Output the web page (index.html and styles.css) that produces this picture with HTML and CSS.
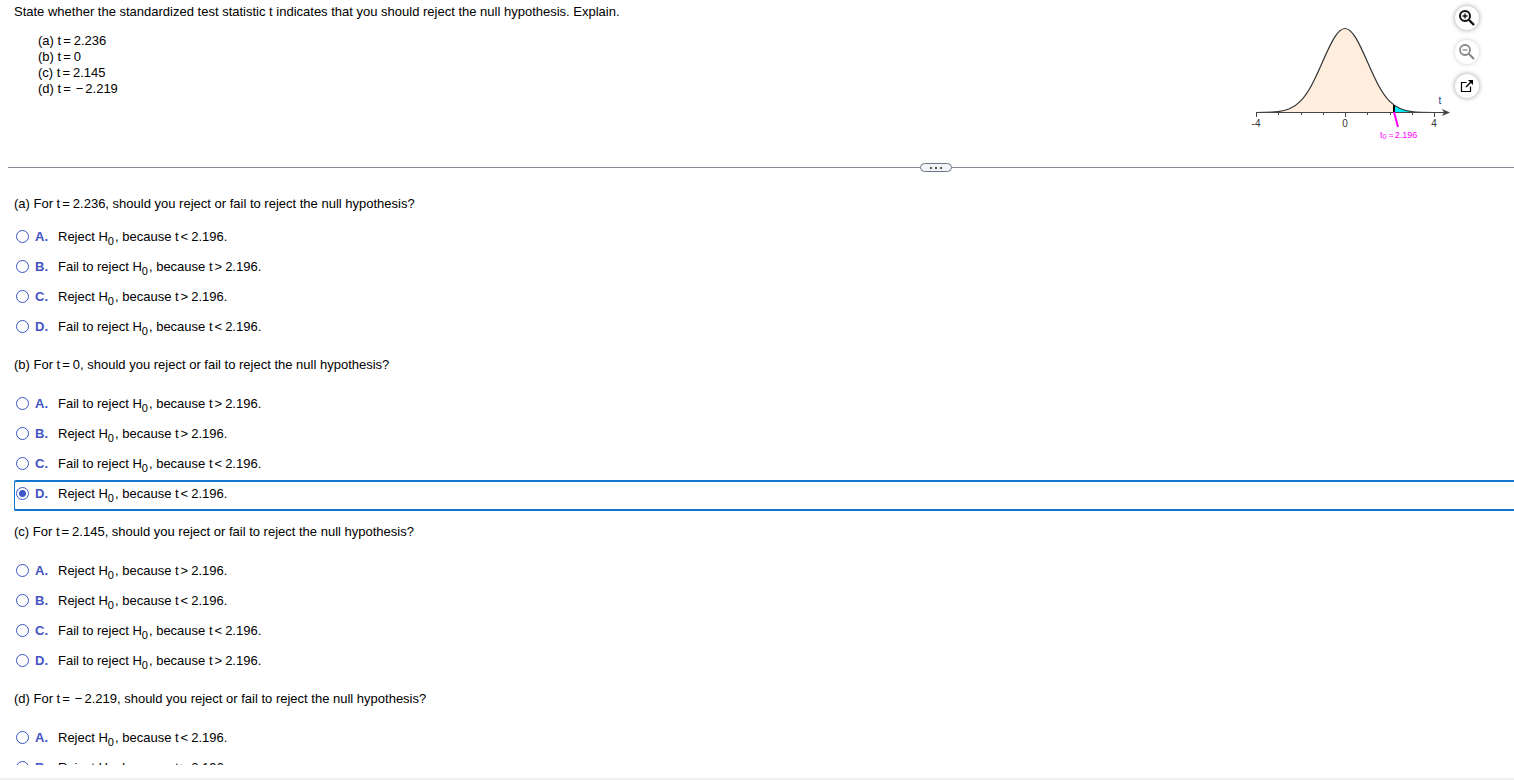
FILE: index.html
```html
<!DOCTYPE html>
<html lang="en">

<head>
    <meta charset="UTF-8">
    <meta name="viewport" content="width=device-width, initial-scale=1.0">
    <title>Hypothesis Test Exercise</title>
    <link rel="stylesheet" href="styles.css">
</head>

<body>
    <main class="exercise">
        <section class="problem">
            <div class="problem-text">
                <p>State whether the standardized test statistic t indicates that you should reject the null hypothesis. Explain.</p>
                <ul class="values">
                    <li>(a) t<span class="op">=</span>2.236</li>
                    <li>(b) t<span class="op">=</span>0</li>
                    <li>(c) t<span class="op">=</span>2.145</li>
                    <li>(d) t<span class="op">=</span><span class="op sign">−</span>2.219</li>
                </ul>
            </div>

            <div class="figure">
                <svg class="graph" width="214" height="144" viewBox="0 0 214 144" role="img" aria-label="Right-tailed t distribution">
                    <!-- Area under the curve -->
                    <path fill="#ffeedd" d="M16 112.5C23.4 112.5 30.8 112.5 38.2 111.6C41.9 111.1 45.7 110.3 49.4 108.8C53.1 107.3 56.8 104.9 60.5 101.1C64.2 97.3 67.9 92 71.6 85.2C75.3 78.4 79 70.1 82.7 61.6C86.4 53.1 90.2 44.6 93.9 38.4C97.6 32.2 101.3 28.5 105 28.5C108.7 28.5 112.4 32.2 116.1 38.4C119.8 44.6 123.6 53.1 127.3 61.6C131 70.1 134.7 78.4 138.4 85.2C142.1 92 145.8 97.3 149.5 101.1L154 105V112.5Z"/>
                    <!-- Rejection region -->
                    <path fill="#00f0ff" d="M154 105C156 106.8 158 107.8 160.6 108.8C164.3 110.3 168.1 111.1 171.8 111.6L180 112.5H154Z"/>
                    <path fill="none" stroke="#333" stroke-width="1.2" d="M16 112.5C23.4 112.5 30.8 112.5 38.2 111.6C41.9 111.1 45.7 110.3 49.4 108.8C53.1 107.3 56.8 104.9 60.5 101.1C64.2 97.3 67.9 92 71.6 85.2C75.3 78.4 79 70.1 82.7 61.6C86.4 53.1 90.2 44.6 93.9 38.4C97.6 32.2 101.3 28.5 105 28.5C108.7 28.5 112.4 32.2 116.1 38.4C119.8 44.6 123.6 53.1 127.3 61.6C131 70.1 134.7 78.4 138.4 85.2C142.1 92 145.8 97.3 149.5 101.1C153.2 104.9 156.9 107.3 160.6 108.8C164.3 110.3 168.1 111.1 171.8 111.6C179.2 112.5 186.6 112.5 194 112.5"/>
                    <!-- Axis -->
                    <path fill="none" stroke="#444" d="M16 112.5H204M16.5 112V117M38.5 112V115M61.5 112V115M83.5 112V115M105.5 112V117M127.5 112V115M150.5 112V115M172.5 112V115M194.5 112V117"/>
                    <path fill="#444" d="M202 109L210 112.5L202 116L204 112.5Z"/>
                    <path fill="none" stroke="#000" stroke-width="2" d="M154 105V112"/>
                    <path fill="none" stroke="#f0f" stroke-width="2" d="M154 112L158 127"/>
                    <text class="tick" x="16" y="127">-4</text>
                    <text class="tick" x="105" y="127">0</text>
                    <text class="tick" x="194" y="127">4</text>
                    <text class="tick axis-name" x="200" y="104">t</text>
                    <text class="critical" x="140" y="138">t<tspan class="critical-sub" dy="1">0</tspan><tspan dx="2" dy="-1">=</tspan><tspan dx="1">2.196</tspan></text>
                </svg>
                <div class="tools">
                    <button type="button" class="tool" aria-label="Zoom in">
                        <svg width="18" height="18" viewBox="0 0 18 18" fill="none" stroke="#111">
                            <circle cx="7" cy="7" r="5" stroke-width="2"/>
                            <path stroke-width="2.4" d="M11 11L16 16"/>
                            <path stroke-width="1.3" d="M4.5 7H9.5M7 4.5V9.5"/>
                        </svg>
                    </button>
                    <button type="button" class="tool" aria-label="Zoom out" disabled>
                        <svg width="18" height="18" viewBox="0 0 18 18" fill="none" stroke="#888">
                            <circle cx="7" cy="7" r="5" stroke-width="1.8"/>
                            <path stroke-width="2.2" d="M11 11L16 16"/>
                            <path stroke-width="1.3" d="M4.5 7H9.5"/>
                        </svg>
                    </button>
                    <button type="button" class="tool" aria-label="Open in a new window">
                        <svg width="18" height="18" viewBox="0 0 18 18" fill="none" stroke="#000">
                            <path stroke-width="1.2" d="M8.5 5.5H3.5V14.5H12.5V9.5"/>
                            <path stroke-width="1.5" d="M8 10L13.5 4.5"/>
                            <path fill="#000" stroke="none" d="M10 3H15V8Z"/>
                        </svg>
                    </button>
                </div>
            </div>
        </section>

        <div class="divider">
            <button type="button" class="divider-handle" aria-label="Resize panels">
                <i></i><i></i><i></i>
            </button>
        </div>

        <form class="questions">
            <fieldset class="question first">
                <legend>(a) For t<span class="op">=</span>2.236, should you reject or fail to reject the null hypothesis?</legend>
                <label class="option"><input type="radio" name="a"><b>A.</b><span>Reject H<sub>0</sub>, because t<span class="op">&lt;</span>2.196.</span></label>
                <label class="option"><input type="radio" name="a"><b>B.</b><span>Fail to reject H<sub>0</sub>, because t<span class="op">&gt;</span>2.196.</span></label>
                <label class="option"><input type="radio" name="a"><b>C.</b><span>Reject H<sub>0</sub>, because t<span class="op">&gt;</span>2.196.</span></label>
                <label class="option"><input type="radio" name="a"><b>D.</b><span>Fail to reject H<sub>0</sub>, because t<span class="op">&lt;</span>2.196.</span></label>
            </fieldset>

            <fieldset class="question">
                <legend>(b) For t<span class="op">=</span>0, should you reject or fail to reject the null hypothesis?</legend>
                <label class="option"><input type="radio" name="b"><b>A.</b><span>Fail to reject H<sub>0</sub>, because t<span class="op">&gt;</span>2.196.</span></label>
                <label class="option"><input type="radio" name="b"><b>B.</b><span>Reject H<sub>0</sub>, because t<span class="op">&gt;</span>2.196.</span></label>
                <label class="option"><input type="radio" name="b"><b>C.</b><span>Fail to reject H<sub>0</sub>, because t<span class="op">&lt;</span>2.196.</span></label>
                <label class="option selected"><input type="radio" name="b" checked><b>D.</b><span>Reject H<sub>0</sub>, because t<span class="op">&lt;</span>2.196.</span></label>
            </fieldset>

            <fieldset class="question">
                <legend>(c) For t<span class="op">=</span>2.145, should you reject or fail to reject the null hypothesis?</legend>
                <label class="option"><input type="radio" name="c"><b>A.</b><span>Reject H<sub>0</sub>, because t<span class="op">&gt;</span>2.196.</span></label>
                <label class="option"><input type="radio" name="c"><b>B.</b><span>Reject H<sub>0</sub>, because t<span class="op">&lt;</span>2.196.</span></label>
                <label class="option"><input type="radio" name="c"><b>C.</b><span>Fail to reject H<sub>0</sub>, because t<span class="op">&lt;</span>2.196.</span></label>
                <label class="option"><input type="radio" name="c"><b>D.</b><span>Fail to reject H<sub>0</sub>, because t<span class="op">&gt;</span>2.196.</span></label>
            </fieldset>

            <fieldset class="question">
                <legend>(d) For t<span class="op">=</span><span class="op sign">−</span>2.219, should you reject or fail to reject the null hypothesis?</legend>
                <label class="option"><input type="radio" name="d"><b>A.</b><span>Reject H<sub>0</sub>, because t<span class="op">&lt;</span>2.196.</span></label>
                <label class="option"><input type="radio" name="d"><b>B.</b><span>Reject H<sub>0</sub>, because t<span class="op">&gt;</span>2.196.</span></label>
            </fieldset>
        </form>
    </main>
    <footer class="bottom-bar"></footer>
</body>

</html>
```
FILE: styles.css
```css
/* General Styles */
* {
    box-sizing: border-box;
}

body {
    display: flex;
    flex-direction: column;
    height: 100vh;
    margin: 0;
    overflow: hidden;
    font-family: "Liberation Sans", Arial, sans-serif;
    font-size: 13px;
    line-height: 16px;
    color: #000;
    background-color: #fff;
}

p {
    margin: 0;
}

.exercise {
    display: flex;
    flex: 1;
    flex-direction: column;
    min-height: 0;
    padding-bottom: 13px;
}

/* Problem statement */
.problem {
    display: flex;
    justify-content: space-between;
    height: 160px;
    padding-left: 14px;
}

.problem-text {
    padding-top: 4px;
}

.values {
    margin: 13px 0 0;
    padding: 0 0 0 24px;
    list-style: none;
}

.op {
    margin: 0 3px 0 2px;
}

.op.sign {
    margin: 0 2px;
}

.figure {
    display: flex;
    padding-right: 35px;
}

.tick {
    font-size: 10px;
    text-anchor: middle;
    fill: #333;
}

.axis-name {
    fill: #224488;
}

.critical {
    font-size: 9px;
    fill: #f0f;
}

.critical-sub {
    font-size: 7px;
}

.tools {
    display: flex;
    flex-direction: column;
    gap: 10px;
    padding-top: 6px;
}

.tool {
    display: flex;
    align-items: center;
    justify-content: center;
    width: 24px;
    height: 24px;
    margin-left: 1px;
    padding: 0;
    border: none;
    border-radius: 50%;
    background-color: #fff;
    box-shadow: 0 0 5px rgba(0, 0, 0, 0.4);
}

.tool:disabled {
    box-shadow: 0 0 5px rgba(0, 0, 0, 0.2);
}

/* Divider between the panels */
.divider {
    display: flex;
    align-items: center;
    height: 15px;
    padding-left: 8px;
}

.divider::before,
.divider::after {
    content: "";
    height: 1px;
    background-color: #858c96;
}

.divider::before {
    flex: 912;
}

.divider::after {
    flex: 562;
}

.divider-handle {
    display: flex;
    align-items: center;
    justify-content: center;
    gap: 3px;
    width: 32px;
    height: 9px;
    padding: 0;
    border: 1px solid #6b7684;
    border-radius: 5px;
    background-color: #f2f4f7;
}

.divider-handle i {
    width: 2px;
    height: 2px;
    background-color: #555;
}

/* Questions */
.questions {
    flex: 1;
    min-height: 0;
    padding: 21px 0 0 14px;
    overflow: hidden;
}

.question {
    min-width: 0;
    margin: 0 0 13px;
    padding: 0;
    border: none;
}

.question legend {
    margin-bottom: 18px;
    padding: 0;
}

.question.first legend {
    margin-bottom: 12px;
}

.option {
    display: flex;
    align-items: flex-start;
    height: 30px;
    padding-top: 5px;
}

.option input {
    width: 13px;
    height: 13px;
    margin: 1px 6px 0 2px;
    appearance: none;
    border: 1px solid #3c55c8;
    border-radius: 50%;
    background-color: #fff;
}

.option input:checked {
    background: radial-gradient(circle, #3c55c8 3px, #fff 4px);
}

.option b {
    width: 23px;
    color: #4353c4;
}

.option sub {
    margin-right: 1px;
    font-size: 11px;
    line-height: 0;
    vertical-align: -4px;
}

.option.selected {
    border-radius: 2px 0 0 2px;
    box-shadow: inset 1px 0 #1177cc, inset 0 -2px #1177cc, 0 -1px #1177cc, inset 0 1px #1177cc;
}

.bottom-bar {
    height: 2px;
    background-color: #f0f0f0;
}
```
